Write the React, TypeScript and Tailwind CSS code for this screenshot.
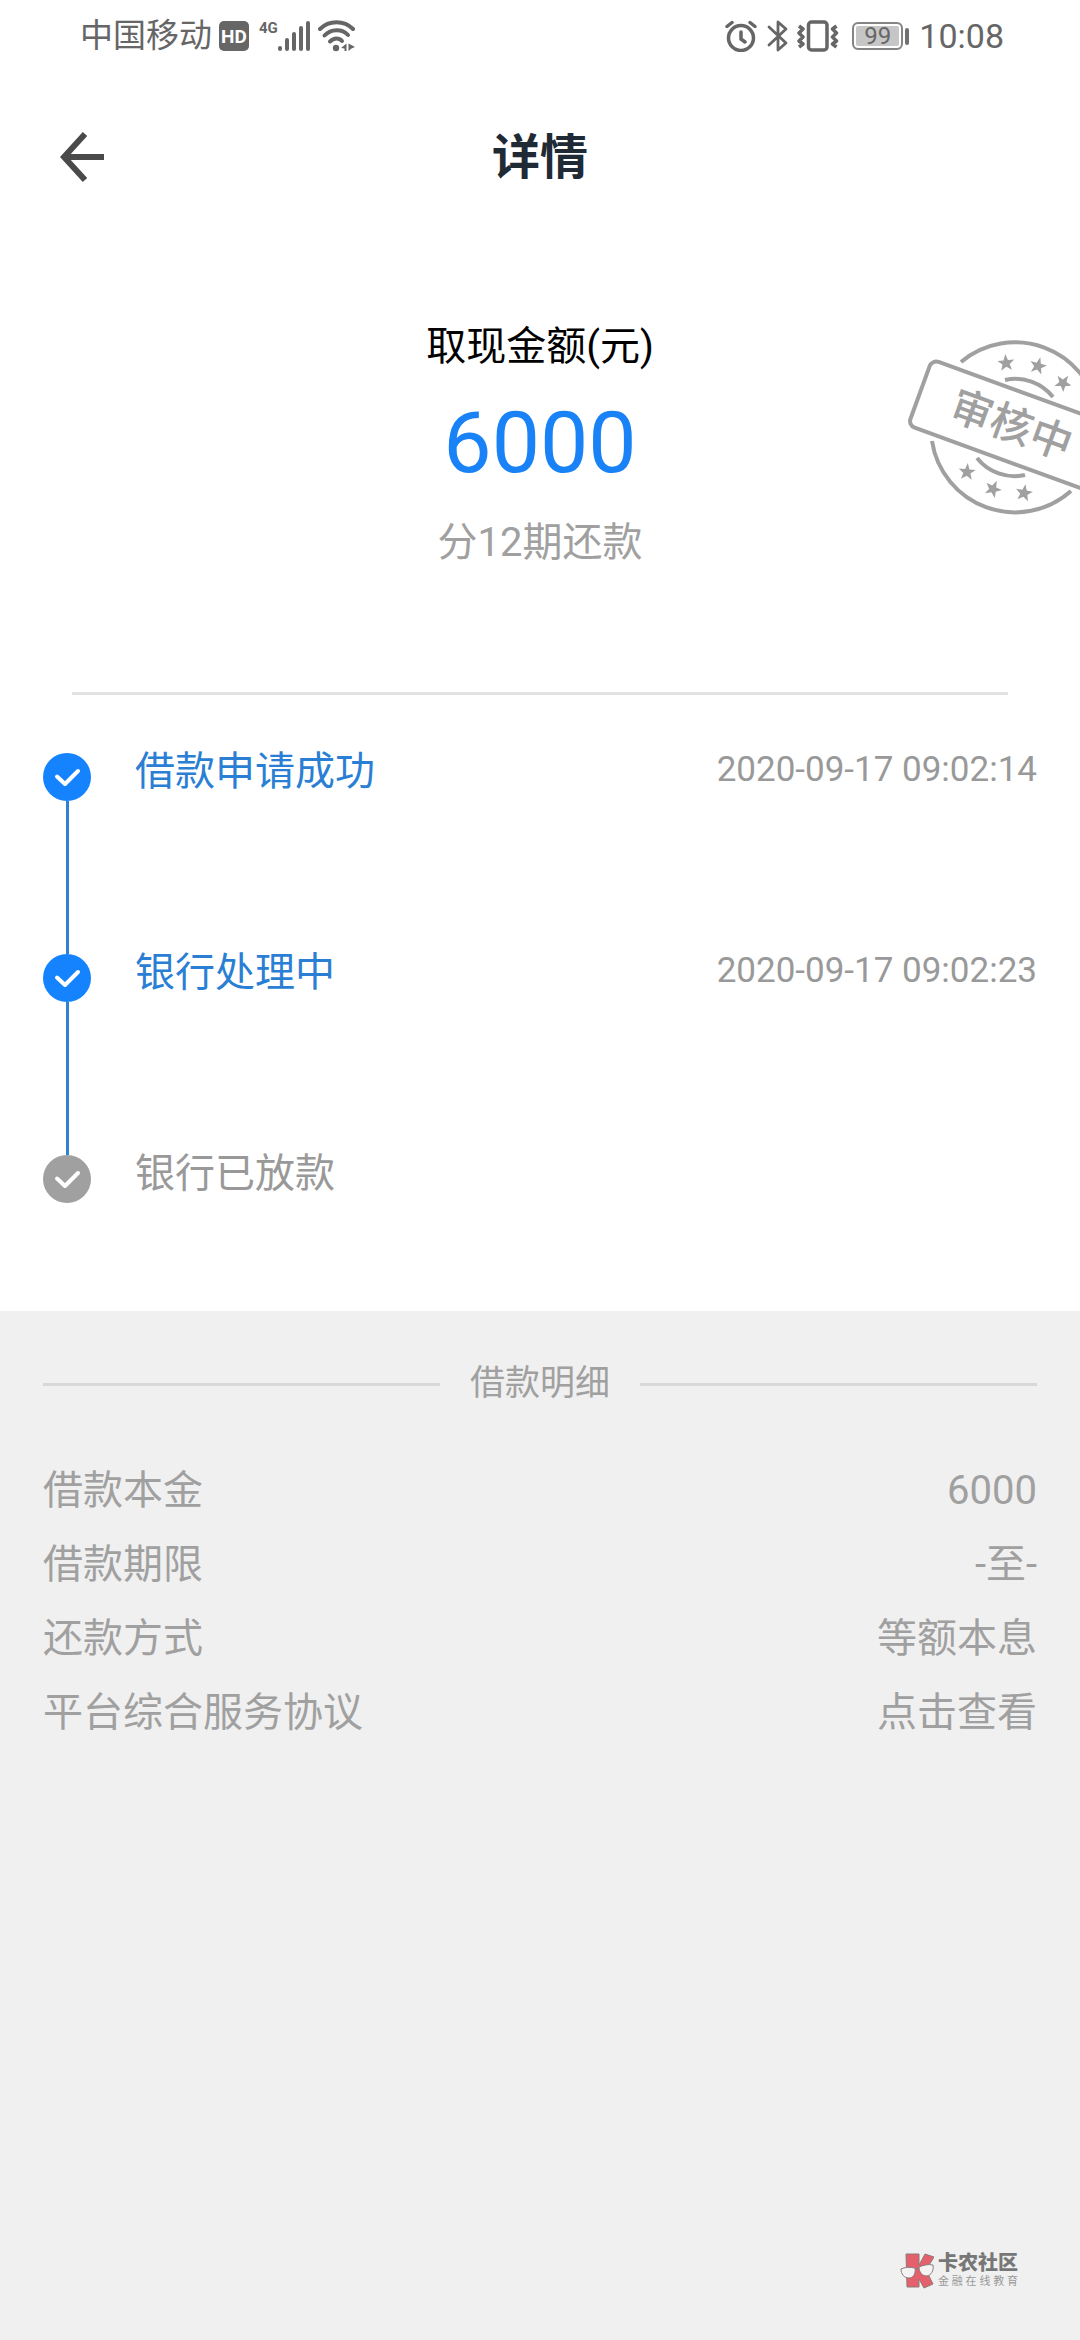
interface Step {
  title: string;
  time?: string;
  done: boolean;
}

interface DetailRow {
  label: string;
  value: string;
  href?: string;
}

const STEPS: Step[] = [
  { title: '借款申请成功', time: '2020-09-17 09:02:14', done: true },
  { title: '银行处理中', time: '2020-09-17 09:02:23', done: true },
  { title: '银行已放款', done: false },
];

const DETAILS: DetailRow[] = [
  { label: '借款本金', value: '6000' },
  { label: '借款期限', value: '-至-' },
  { label: '还款方式', value: '等额本息' },
  { label: '平台综合服务协议', value: '点击查看', href: '#agreement' },
];

const STARS = [
  { x: 126, y: 43, r: -5 },
  { x: 158, y: 46, r: 15 },
  { x: 183, y: 63, r: 35 },
  { x: 87, y: 152, r: 5 },
  { x: 113, y: 169, r: 25 },
  { x: 144, y: 173, r: 10 },
];

function StatusBar() {
  return (
    <div className="flex h-[72px] items-center justify-between pl-20 pr-[76px] text-[#666]">
      <div className="flex items-center">
        <span className="text-[33px] leading-[48px]">中国移动</span>
        <span className="ml-[7px] flex size-[30px] items-center justify-center rounded-[5px] bg-[#666] text-[19px] font-bold leading-none text-white">
          HD
        </span>
        <div className="ml-[10px] flex h-8 items-start">
          <span className="text-[15px] font-bold leading-[16px]">4G</span>
          <svg width="32" height="32" viewBox="0 0 32 32" stroke="currentColor" strokeWidth="4" strokeLinecap="round">
            <path d="M2 29v-1M9 29v-9M16 29V14M23 29V8M30 29V3" />
          </svg>
        </div>
        <svg className="ml-2" width="38" height="32" viewBox="0 0 38 32" fill="none" stroke="currentColor">
          <path d="M2 9C11 0 26 0 35 9" strokeWidth="4" strokeLinecap="round" />
          <path d="M6.500 15.500C13 8.500 24 8.500 30 15" strokeWidth="4" strokeLinecap="round" />
          <path d="M12 21.500c4-4 9-4 12-.5" strokeWidth="4" strokeLinecap="round" />
          <circle cx="18" cy="28" r="3.200" fill="currentColor" stroke="none" />
          <path d="M28.500 23.500v7.500h-2v-2.500l-3.500-.500zM30.500 31v-7.500l6.500 3.500-3.500 1.500z" fill="currentColor" stroke="none" />
        </svg>
      </div>

      <div className="flex items-center">
        <svg width="32" height="32" viewBox="0 0 32 32" fill="none" stroke="currentColor" strokeWidth="3.500" strokeLinecap="round">
          <circle cx="16" cy="18" r="12.500" />
          <path d="M16 12v7l4 3M2 6.500l5-4M30 6.500l-5-4" />
        </svg>
        <svg className="ml-[10px]" width="21" height="32" viewBox="0 0 21 32" fill="none" stroke="currentColor" strokeWidth="2.800" strokeLinejoin="round" strokeLinecap="round">
          <path d="M2 7l17 16-8 7V2l8 7L2 25" />
        </svg>
        <svg className="ml-[9px]" width="42" height="32" viewBox="0 0 42 32" fill="none" stroke="currentColor">
          <rect x="11.500" y="2" width="18.500" height="28" rx="3" strokeWidth="3.500" />
          <path d="M2 6l4 3-4 4 4 4-4 4 4 3-4 3M39.500 6l-4 3 4 4-4 4 4 4-4 3 4 3" strokeWidth="3.500" strokeLinejoin="round" />
        </svg>
        <span className="ml-[13px] flex h-7 w-[51px] items-center justify-center rounded-md border-2 border-[#858585] bg-[#c6c6c6] text-[24px] leading-none shadow-[inset_0_0_0_2px_white]">
          99
        </span>
        <span className="ml-0.5 h-[17px] w-1 rounded-sm bg-[#707070]" />
        <span className="ml-[10px] text-[34px] leading-[48px]">10:08</span>
      </div>
    </div>
  );
}

function Header() {
  return (
    <header className="grid h-[172px] grid-cols-3 items-center px-[60px]">
      <button type="button" aria-label="返回" className="w-fit">
        <svg width="46" height="54" viewBox="0 0 46 54" fill="none" stroke="#4a4a4a" strokeWidth="6">
          <path d="M25 3L4 26l21 23M4 26h40" />
        </svg>
      </button>
      <h1 className="text-center text-[48px] font-bold leading-[68px] text-[#202a35]">详情</h1>
    </header>
  );
}

// "Under review" seal, it runs off the right edge of the screen
function ReviewStamp() {
  return (
    <svg
      className="absolute right-0 top-[76px]"
      width="200"
      height="210"
      viewBox="0 0 200 210"
      fill="none"
      stroke="#a0a0a0"
      strokeWidth="4"
    >
      <path d="M81 42A84 84 0 0 1 218 93" />
      <path d="M52 121A84 84 0 0 0 191 171" />
      <path d="M125 60A48 48 0 0 1 173 77" />
      <path d="M97 138A48 48 0 0 0 145 155" />
      <g transform="rotate(20 135 107)">
        <rect x="34" y="72" width="202" height="70" rx="7" />
        <text x="131" y="121" fontSize="42" fontWeight="500" textAnchor="middle" fill="#a0a0a0" stroke="none">
          审核中
        </text>
      </g>
      {STARS.map(s => (
        <path
          key={s.x}
          transform={`translate(${s.x} ${s.y}) rotate(${s.r})`}
          d="M0-9L2.200-2.800L8.500-2.800L3.600 1.300L5.400 7.300L0 3.700L-5.400 7.300L-3.600 1.300L-8.500-2.800L-2.200-2.800Z"
          fill="#a0a0a0"
          stroke="none"
        />
      ))}
    </svg>
  );
}

function CheckDot({ done }: { done: boolean }) {
  return (
    <svg className="shrink-0" width="48" height="48" viewBox="0 0 48 48" fill="none">
      <circle cx="24" cy="24" r="24" fill={done ? '#1583fd' : '#a0a0a0'} />
      <path d="M14 23.500l8 7.500 13-13" stroke="white" strokeWidth="4" strokeLinecap="round" strokeLinejoin="round" />
    </svg>
  );
}

function Timeline() {
  return (
    <ol className="px-[43px] pb-[108px] pt-[58px]">
      {STEPS.map((step, i) => {
        const last = i === STEPS.length - 1;
        return (
          <li key={step.title} className={`flex ${last ? 'h-12' : 'h-[201px]'}`}>
            <div className="flex flex-col items-center">
              <CheckDot done={step.done} />
              {!last && <span className="w-[3px] flex-1 bg-[#2f82d0]" />}
            </div>
            <div className="-mt-[7px] ml-11 flex flex-1 items-start justify-between">
              <span className={`text-[40px] leading-[52px] ${step.done ? 'text-[#2a7fd4]' : 'text-[#999]'}`}>
                {step.title}
              </span>
              {step.time && <time className="text-[35px] leading-[48px] text-[#999]">{step.time}</time>}
            </div>
          </li>
        );
      })}
    </ol>
  );
}

function Watermark() {
  return (
    <div className="mb-[50px] mr-[62px] mt-auto flex items-center gap-1 self-end">
      <svg width="34" height="36" viewBox="0 0 34 36" stroke="#8c7b7b" strokeWidth="1">
        <path d="M6 1h13v11l6-11 9 3-8 13 7 14-9 4-5-9v8H7z" fill="#e4606c" />
        <path d="M1 16c4-2 9-2 14-1 1 6-2 10-6 10-5 0-8-4-8-9zM19 14c5-2 9-3 14-2 1 6-2 10-6 11-5 0-8-4-8-9z" fill="#f4f4f4" />
        <path d="M15 16l4-1" />
      </svg>
      <div className="w-20">
        <p className="text-[20px] font-black leading-[22px] text-[#777]">卡农社区</p>
        <p className="text-[11px] leading-[16px] text-[#999] [text-align-last:justify]">金融在线教育</p>
      </div>
    </div>
  );
}

export default function App() {
  return (
    <div className="flex min-h-screen flex-col overflow-x-hidden bg-[#f0f0f0] font-[Roboto,'Noto_Sans_CJK_SC',sans-serif]">
      <div className="bg-white">
        <StatusBar />
        <Header />

        {/* Amount */}
        <section className="relative pb-[121px] pt-[75px] text-center">
          <p className="text-[40px] leading-[56px] text-black">取现金额(元)</p>
          <p className="mt-4 text-[86px] leading-[104px] text-[#1a82f7]">6000</p>
          <p className="mt-5 text-[40px] leading-[56px] text-[#a0a0a0]">分12期还款</p>
          <ReviewStamp />
        </section>

        <hr className="mx-[72px] border-t-[3px] border-[#e2e2e2]" />
        <Timeline />
      </div>

      {/* Loan details */}
      <section className="px-[43px] pt-[49px] text-[#a0a0a0]">
        <div className="flex items-center gap-[30px]">
          <span className="h-[3px] flex-1 bg-[#d8d8d8]" />
          <h2 className="text-[35px] leading-[48px]">借款明细</h2>
          <span className="h-[3px] flex-1 bg-[#d8d8d8]" />
        </div>
        <dl className="mt-[46px] text-[40px] leading-[74px]">
          {DETAILS.map(row => (
            <div key={row.label} className="flex justify-between">
              <dt>{row.label}</dt>
              <dd>{row.href ? <a href={row.href}>{row.value}</a> : row.value}</dd>
            </div>
          ))}
        </dl>
      </section>

      <Watermark />
    </div>
  );
}
